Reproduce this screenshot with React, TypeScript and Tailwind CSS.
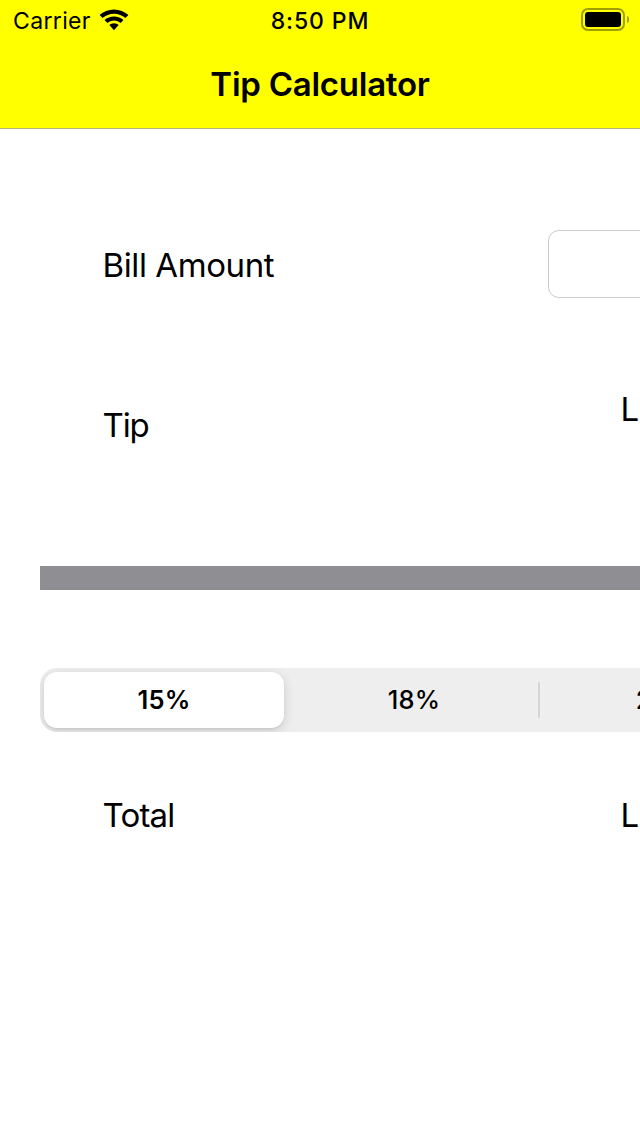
function StatusBar() {
  return (
    <div className="grid h-10 grid-cols-3 items-center">
      <div className="flex h-10 items-center gap-2 pl-[13px]">
        <span className="h-10 text-[23px] leading-[42px] tracking-[0.35px]">Carrier</span>
        <svg width="30" height="22" viewBox="0 0 30 22">
          <path d="M15 .5C9.500.5 4.400 2.600.6 6l3 3C6.600 6.300 10.600 4.700 15 4.700s8.400 1.600 11.400 4.300l3-3C25.600 2.600 20.500.5 15 .5Z" />
          <path d="M15 7.500c-3.700 0-7 1.400-9.500 3.600l3 3C10.200 12.500 12.500 11.600 15 11.600s4.800.9 6.500 2.500l3-3C22 8.900 18.700 7.500 15 7.500Z" />
          <path d="M15 14.200c-1.800 0-3.400.7-4.600 1.800L15 21.200l4.600-5.200c-1.200-1.100-2.800-1.800-4.600-1.800Z" />
        </svg>
      </div>
      <span className="h-10 text-center text-[23px] leading-[42px] font-medium tracking-[0.9px]">8:50 PM</span>
      <div className="flex justify-end pr-[11px]">
        <svg width="48" height="24" viewBox="0 0 48 24">
          <rect x="1" y="1" width="42" height="21" rx="6" fill="none" stroke="#a0a000" strokeWidth="2" />
          <rect x="4" y="4" width="36" height="15" rx="3" />
          <path d="M46 8c3 1 3 6 0 7Z" fill="#a0a000" />
        </svg>
      </div>
    </div>
  );
}

export default function App() {
  return (
    <div className="flex h-[1136px] w-[640px] flex-col overflow-hidden bg-white font-['Inter',sans-serif] text-black">
      <header className="h-[129px] shrink-0 border-b border-[#b3b380] bg-[#ffff00]">
        <StatusBar />
        <h1 className="text-center text-[33px] leading-[88px] font-semibold tracking-[-0.25px]">Tip Calculator</h1>
      </header>
      <main className="flex flex-col pl-10 text-[33px] leading-10 tracking-[-0.4px]">
        <div className="mt-[101px] flex h-[68px] items-center pl-[62.5px]">
          <span className="w-[445.5px] shrink-0 pt-0.5">Bill Amount</span>
          <div className="h-[68px] w-[190px] shrink-0 rounded-[11px] border border-[#cccccc] bg-white" />
        </div>
        <div className="mt-[91px] flex pl-[62.5px]">
          <span className="mt-4 w-[518px] shrink-0 tracking-[-1.1px]">Tip</span>
          <span className="shrink-0 tracking-[-0.2px]">Label</span>
        </div>
        <div className="mt-[121px] h-6 bg-[#8e8e93]" />
        <div className="mt-[78px] flex h-16 w-[748px] shrink-0 items-center overflow-hidden rounded-[17px] bg-[#eeeeee] text-[25.5px] tracking-normal">
          <div className="w-[248px] p-1">
            <div className="flex h-14 items-center justify-center rounded-[13px] bg-white font-semibold tracking-[0.2px] shadow-[0_3px_12px_rgba(0,0,0,0.14),0_2px_2px_rgba(0,0,0,0.05)]">
              15%
            </div>
          </div>
          <div className="w-0.5" />
          <span className="w-[248px] text-center font-medium tracking-[0.2px]">18%</span>
          <div className="h-9 w-0.5 rounded-full bg-[#d5d5d6]" />
          <span className="w-[248px] text-center font-medium tracking-[-0.3px]">20%</span>
        </div>
        <div className="mt-[63px] flex pl-[62.5px]">
          <span className="w-[518px] shrink-0 tracking-[-0.8px]">Total</span>
          <span className="shrink-0 tracking-[-0.2px]">Label</span>
        </div>
      </main>
    </div>
  );
}
